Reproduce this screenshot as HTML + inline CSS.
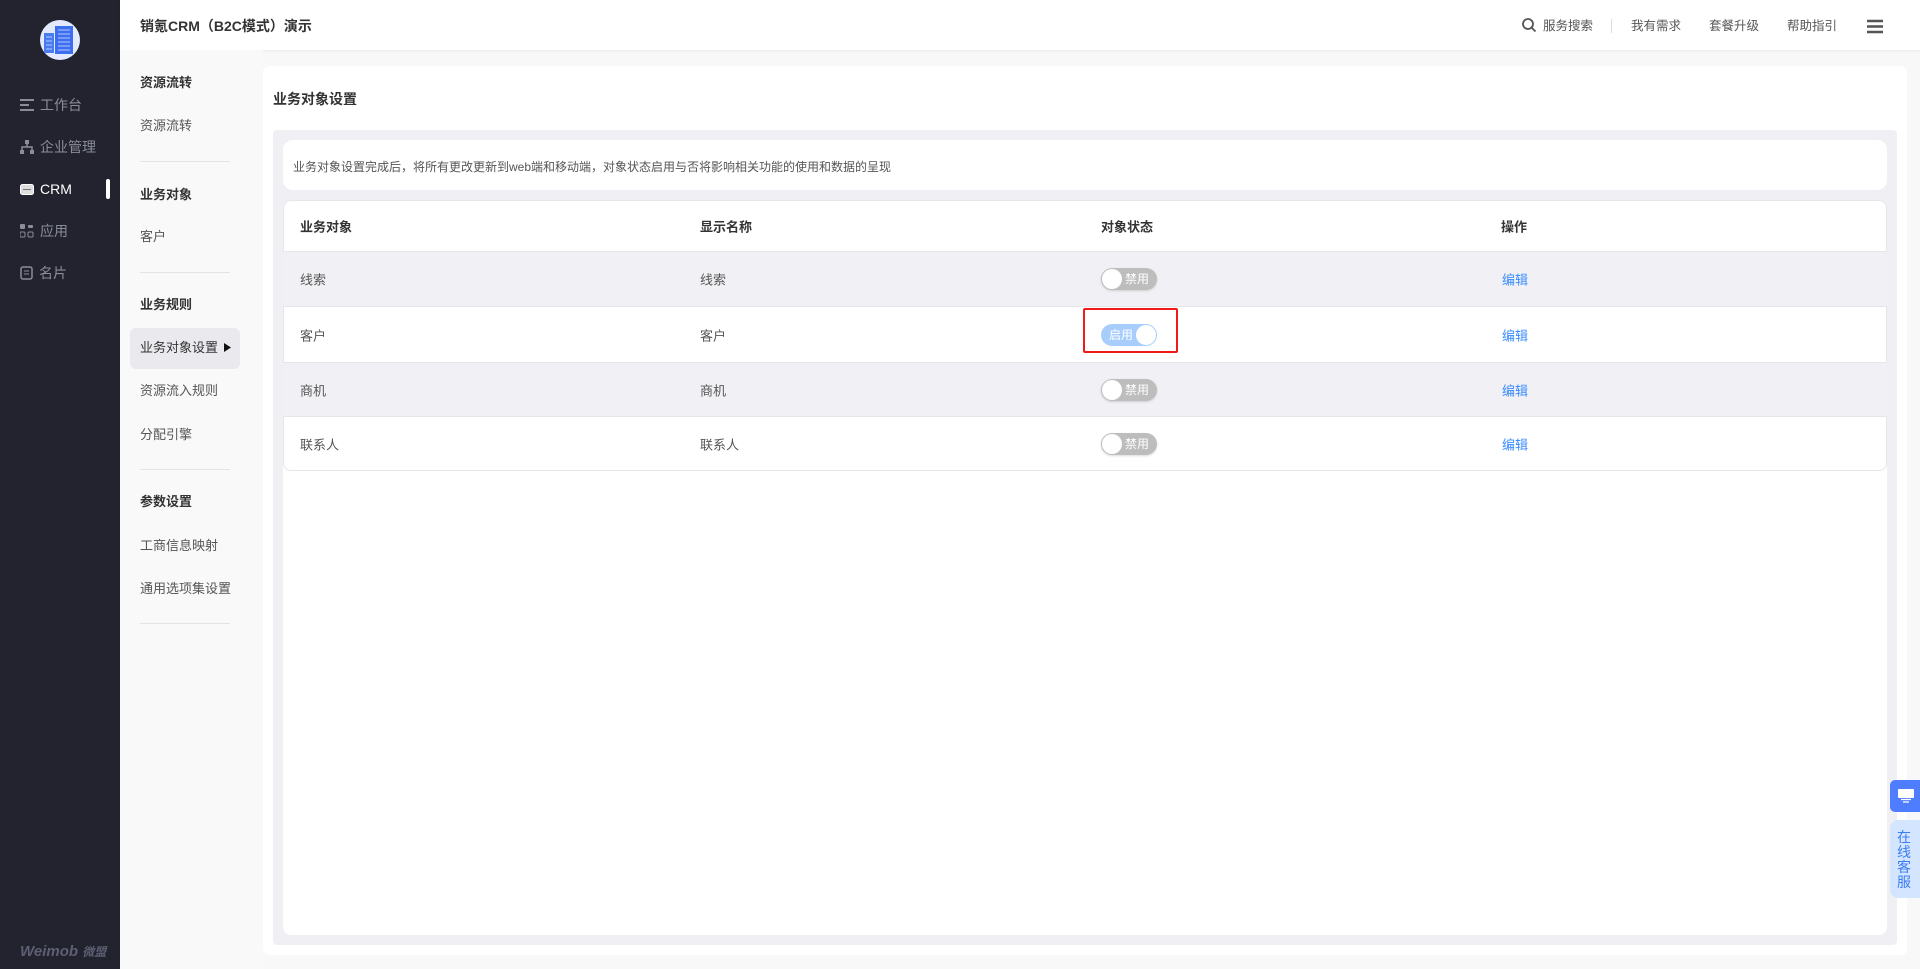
<!DOCTYPE html>
<html><head><meta charset="utf-8"><style>
*{margin:0;padding:0;box-sizing:border-box}
body{width:1920px;height:969px;overflow:hidden;background:#f8f8f9;font-family:"Liberation Sans","Noto Sans CJK SC",sans-serif;position:relative;color:#333}
.abs{position:absolute}
.side{left:0;top:0;width:120px;height:969px;background:#22232f}
.mi{position:absolute;left:20px;font-size:14px;color:#8a8c99;line-height:20px;display:flex;align-items:center}
.mi svg{margin-right:6px}
.hdr{left:120px;top:0;width:1800px;height:50px;background:#fff;box-shadow:0 1px 3px rgba(0,0,0,.06)}
.t13{font-size:12.5px;line-height:18px}
.sub{left:120px;top:50px;width:143px;height:919px;background:#f9f9f9}
.s{position:absolute;left:20px;font-size:13px;line-height:18px;color:#555}
.s.b{font-weight:bold;color:#333}
.dv{position:absolute;left:20px;width:90px;height:1px;background:#e3e3e6}
.row{position:absolute;left:283px;width:1604px;font-size:13px;color:#555}
.row span{position:absolute;top:50%;transform:translateY(-50%)}
.tg{position:absolute;left:818px;top:50%;margin-top:-11px;width:56px;height:22px;border-radius:11px;font-size:12px;color:#fff;line-height:22px}
.off{background:#bdbdbd;box-shadow:0 1px 2px rgba(0,0,0,.15)}
.off i{position:absolute;left:1px;top:1px;width:20px;height:20px;border-radius:50%;background:#fff}
.off b{position:absolute;left:24px;font-weight:normal}
.on{background:#a6cdfb}
.on i{position:absolute;right:1px;top:1px;width:20px;height:20px;border-radius:50%;background:#fff}
.on b{position:absolute;left:8px;font-weight:normal}
.ed{color:#3c8cff}
</style></head><body>
<div class="abs side">
  <svg class="abs" style="left:40px;top:20px" width="40" height="40" viewBox="0 0 40 40"><circle cx="20" cy="20" r="20" fill="#e3e9ff"/><rect x="4" y="13" width="10" height="20" fill="#4a7cf0"/><rect x="15" y="6" width="18" height="28" fill="#3d6ef0"/><g stroke="#9bb8ff" stroke-width="1.2"><path d="M6 17h6M6 21h6M6 25h6M6 29h6M18 10h12M18 14h12M18 18h12M18 22h12M18 26h12M18 30h12"/></g></svg>
  <div class="mi" style="top:95px"><svg width="14" height="12"><path d="M0 1h14M0 6h9M0 11h14" stroke="#8a8c99" stroke-width="2"/></svg>工作台</div>
  <div class="mi" style="top:137px"><svg width="14" height="14"><rect x="5" y="0" width="4" height="4" fill="#8a8c99"/><rect x="0" y="10" width="4" height="4" fill="#8a8c99"/><rect x="10" y="10" width="4" height="4" fill="#8a8c99"/><path d="M7 4v3M2 10V7h10v3" stroke="#8a8c99" fill="none" stroke-width="1.5"/></svg>企业管理</div>
  <div class="mi" style="top:179px;color:#fff"><svg width="14" height="11"><rect x=".5" y=".5" width="13" height="10" rx="2" fill="#ddd" stroke="#fff"/><path d="M3 5.5h8" stroke="#777"/></svg>CRM</div>
  <div class="abs" style="left:106px;top:179px;width:4px;height:20px;background:#fff;border-radius:2px"></div>
  <div class="mi" style="top:221px"><svg width="14" height="14"><rect x="0" y="0" width="5" height="5" rx="1" fill="#8a8c99"/><rect x="8" y="1" width="5" height="3" rx="1" fill="#8a8c99"/><rect x="0" y="8" width="5" height="5" rx="1" fill="none" stroke="#8a8c99"/><rect x="8" y="8" width="5" height="5" rx="1" fill="none" stroke="#8a8c99"/></svg>应用</div>
  <div class="mi" style="top:263px"><svg width="13" height="14"><rect x="1" y="1" width="11" height="12" rx="2" fill="none" stroke="#8a8c99" stroke-width="1.5"/><path d="M4 5h5M4 8h5" stroke="#8a8c99"/></svg>名片</div>
  <div class="abs" style="left:20px;top:943px;font-size:15px;font-style:italic;font-weight:bold;color:#5d5f73">Weimob <span style="font-size:12px">微盟</span></div>
</div>
<div class="abs hdr">
  <div class="abs" style="left:20px;top:16px;font-size:14px;font-weight:bold;color:#333">销氪CRM（B2C模式）演示</div>
  <svg class="abs" style="left:1402px;top:18px" width="14" height="14"><circle cx="6" cy="6" r="5" fill="none" stroke="#555" stroke-width="1.8"/><path d="M9.5 9.5l4 4" stroke="#555" stroke-width="1.8"/></svg>
  <div class="abs t13" style="left:1423px;top:17px;color:#555">服务搜索</div>
  <div class="abs" style="left:1491px;top:19px;width:1px;height:14px;background:#ddd"></div>
  <div class="abs t13" style="left:1511px;top:17px;color:#555">我有需求</div>
  <div class="abs t13" style="left:1589px;top:17px;color:#555">套餐升级</div>
  <div class="abs t13" style="left:1667px;top:17px;color:#555">帮助指引</div>
  <svg class="abs" style="left:1747px;top:19px" width="16" height="15"><path d="M0 2h16M0 7.5h16M0 13h16" stroke="#555" stroke-width="2.5"/></svg>
</div>
<div class="abs sub">
  <div class="s b" style="top:24px">资源流转</div>
  <div class="s" style="top:67px">资源流转</div>
  <div class="dv" style="top:111px"></div>
  <div class="s b" style="top:136px">业务对象</div>
  <div class="s" style="top:178px">客户</div>
  <div class="dv" style="top:222px"></div>
  <div class="s b" style="top:246px">业务规则</div>
  <div class="abs" style="left:10px;top:278px;width:110px;height:41px;background:#e9e9ee;border-radius:6px"></div>
  <div class="s" style="top:289px;color:#333">业务对象设置</div>
  <svg class="abs" style="left:104px;top:293px" width="7" height="9"><path d="M0 0l7 4.5L0 9z" fill="#111"/></svg>
  <div class="s" style="top:332px">资源流入规则</div>
  <div class="s" style="top:376px">分配引擎</div>
  <div class="dv" style="top:419px"></div>
  <div class="s b" style="top:443px">参数设置</div>
  <div class="s" style="top:487px">工商信息映射</div>
  <div class="s" style="top:530px">通用选项集设置</div>
  <div class="dv" style="top:573px"></div>
</div>
<div class="abs" style="left:263px;top:66px;width:1644px;height:889px;background:#fff;border-radius:6px"></div>
<div class="abs" style="left:273px;top:89px;font-size:14px;font-weight:bold;color:#333">业务对象设置</div>
<div class="abs" style="left:273px;top:130px;width:1624px;height:815px;background:#f0f0f4;border-radius:4px"></div>
<div class="abs" style="left:283px;top:140px;width:1604px;height:50px;background:#fff;border-radius:10px"></div>
<div class="abs" style="left:293px;top:158px;font-size:12px;color:#555">业务对象设置完成后，将所有更改更新到web端和移动端，对象状态启用与否将影响相关功能的使用和数据的呈现</div>
<div class="abs" style="left:283px;top:200px;width:1604px;height:735px;background:#fff;border-radius:8px"></div>
<div class="abs" style="left:283px;top:200px;width:1604px;height:271px;border:1px solid #e6e6ea;border-radius:8px"></div>
<div class="row" style="top:200px;height:51px;font-weight:bold;color:#333"><span style="left:17px">业务对象</span><span style="left:417px">显示名称</span><span style="left:818px">对象状态</span><span style="left:1218px">操作</span></div>
<div class="row" style="top:251px;height:56px;background:#f1f1f5;border-top:1px solid #e6e6ea;border-bottom:1px solid #e6e6ea"><span style="left:17px">线索</span><span style="left:417px">线索</span><div class="tg off"><i></i><b>禁用</b></div><span class="ed" style="left:1219px">编辑</span></div>
<div class="row" style="top:307px;height:55px"><span style="left:17px">客户</span><span style="left:417px">客户</span><div class="tg on"><b>启用</b><i></i></div><span class="ed" style="left:1219px">编辑</span></div>
<div class="row" style="top:362px;height:55px;background:#f1f1f5;border-top:1px solid #e6e6ea;border-bottom:1px solid #e6e6ea"><span style="left:17px">商机</span><span style="left:417px">商机</span><div class="tg off"><i></i><b>禁用</b></div><span class="ed" style="left:1219px">编辑</span></div>
<div class="row" style="top:417px;height:53px"><span style="left:17px">联系人</span><span style="left:417px">联系人</span><div class="tg off"><i></i><b>禁用</b></div><span class="ed" style="left:1219px">编辑</span></div>
<div class="abs" style="left:1083px;top:308px;width:95px;height:45px;border:2px solid #f01a1a;border-radius:2px"></div>
<div class="abs" style="left:1890px;top:780px;width:30px;height:32px;background:#4f7dff;border-radius:5px 0 0 5px"></div>
<svg class="abs" style="left:1898px;top:789px" width="16" height="14"><rect x="0" y="0" width="16" height="9" rx="1" fill="#fff"/><path d="M3 10.5h10M5 13h6" stroke="#fff" stroke-width="1.3"/></svg>
<div class="abs" style="left:1890px;top:820px;width:30px;height:78px;background:#d4e6ff;border-radius:8px 0 0 8px;color:#3c7cf6;font-size:14px;line-height:15px;padding:10px 0 0 7px">在<br>线<br>客<br>服</div>
</body></html>
